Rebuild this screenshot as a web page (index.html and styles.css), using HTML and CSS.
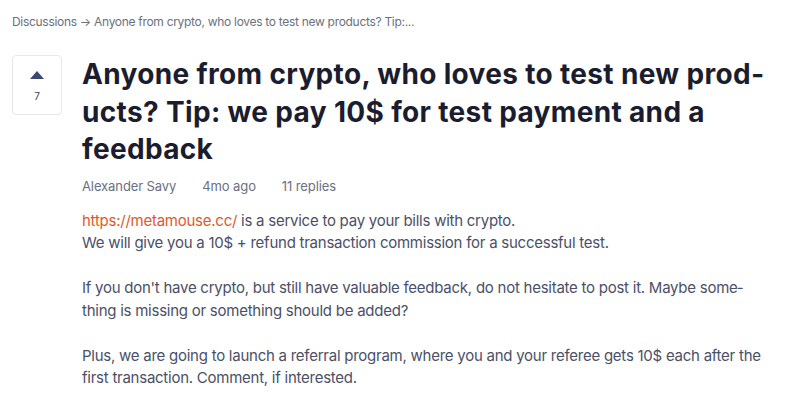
FILE: index.html
```html
<!DOCTYPE html>
<html lang="en">
<head>
<meta charset="utf-8">
<link rel="stylesheet" href="styles.css">
</head>
<body>
<div class="page">
  <nav class="crumbs">Discussions → Anyone from crypto, who loves to test new products? Tip:...</nav>
  <div class="post">
    <div class="vote">
      <svg class="arrow" width="14" height="8" viewBox="0 0 14 8"><path d="M7 0 L14 8 L0 8 Z" fill="#3b4a72"/></svg>
      <span class="count">7</span>
    </div>
    <div class="main">
      <h1 class="title">Anyone from crypto, who loves to test new prod&shy;ucts? Tip: we pay 10$ for test payment and a feedback</h1>
      <div class="meta"><span>Alexander Savy</span><span>4mo ago</span><span>11 replies</span></div>
      <div class="body">
        <p><a href="#">https://metamouse.cc/</a> is a service to pay your bills with crypto.<br>We will give you a 10$ + refund transaction commission for a successful test.</p>
        <p>If you don't have crypto, but still have valuable feedback, do not hesitate to post it. Maybe some&shy;thing is missing or something should be added?</p>
        <p>Plus, we are going to launch a referral program, where you and your referee gets 10$ each after the first transaction. Comment, if interested.</p>
      </div>
    </div>
  </div>
</div>
</body>
</html>
```
FILE: styles.css
```css
html, body { margin: 0; padding: 0; background: #fff; }
body { font-family: Inter, "Noto Sans", sans-serif; -webkit-font-smoothing: antialiased; }
.page { padding: 14px 12px 0 12px; }
.crumbs { font-size: 12px; line-height: 16px; color: #6b7080; letter-spacing: -0.3px; }
.post { display: flex; gap: 20px; margin-top: 25px; }
.vote {
  flex: none; width: 50px; height: 60px; box-sizing: border-box;
  border: 1px solid #e5e7eb; border-radius: 4px;
  display: flex; flex-direction: column; align-items: center;
  padding-top: 15px;
}
.arrow { display: block; }
.count { font-size: 10px; line-height: 12px; color: #3b4254; margin-top: 11px; }
.main { width: 690px; }
.title { margin: 1px 0 0 0; font-size: 28px; line-height: 37.5px; font-weight: 700; color: #1b1d2e; letter-spacing: 0.34px; }
.meta { display: flex; gap: 26px; font-size: 13px; line-height: 20px; color: #6b7080; margin-top: 7px; letter-spacing: -0.1px; }
.body { margin: 14px 6px 0 0; font-size: 15px; line-height: 22.5px; color: #4a5068; letter-spacing: -0.25px; }
.body p { margin: 0 0 22.5px 0; }
.body a { color: #de5a2a; text-decoration: none; }
```
